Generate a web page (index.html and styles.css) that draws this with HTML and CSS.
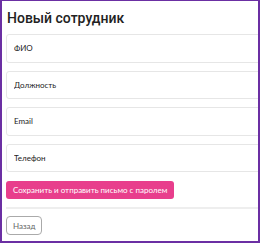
FILE: index.html
```html
<!DOCTYPE html>
<html lang="ru">

<head>
  <meta charset="UTF-8">
  <meta name="viewport" content="width=device-width, initial-scale=1.0">
  <title>Новый сотрудник</title>
  <link rel="stylesheet" href="styles.css">
</head>

<body>
  <div class="frame">
    <h1 class="page-title">Новый сотрудник</h1>
    <form class="employee-form">
      <input class="field" type="text" placeholder="ФИО">
      <input class="field" type="text" placeholder="Должность">
      <input class="field" type="email" placeholder="Email">
      <input class="field" type="tel" placeholder="Телефон">
      <button class="save-button" type="button">Сохранить и отправить письмо с паролем</button>
    </form>
    <hr class="divider">
    <button class="back-button" type="button">Назад</button>
  </div>
</body>

</html>
```

FILE: styles.css
```css
/* Reset */
* {
  margin: 0;
  padding: 0;
  box-sizing: border-box;
}

html,
body {
  height: 100%;
  font-family: Lato, sans-serif;
  background: #fff;
}

/* Purple frame around the page */
.frame {
  height: 243px;
  border: 2px solid #6b2fa3;
  border-top-width: 1px;
  padding: 0 0 0 4px;
  overflow: hidden;
}

.page-title {
  font-family: Roboto, sans-serif;
  font-size: 14px;
  font-weight: 500;
  color: #222;
  line-height: 22px;
  margin: 6px 0 5px 1px;
}

/* Form fields stacked, wider than the window */
.employee-form {
  display: flex;
  flex-direction: column;
  gap: 8px;
  width: 280px;
}

.field {
  height: 28.6px;
  border: 1px solid #e6e6e6;
  border-radius: 3px;
  padding: 0 7px;
  font-family: Lato, sans-serif;
  font-size: 8px;
  color: #222;
}

.field::placeholder {
  color: #222;
}

.save-button {
  align-self: flex-start;
  margin-top: 1px;
  height: 18px;
  padding: 0 7px;
  background: #e83e8c;
  color: #fff;
  border: none;
  border-radius: 3px;
  font-family: Lato, sans-serif;
  font-size: 8px;
}

.divider {
  border: none;
  border-top: 2px solid #eee;
  margin: 8px 0 7px;
}

.back-button {
  display: block;
  height: 19px;
  padding: 0 6px;
  background: #fff;
  color: #666;
  border: 1px solid #aaa;
  border-radius: 4px;
  font-family: Lato, sans-serif;
  font-size: 8px;
}
```
